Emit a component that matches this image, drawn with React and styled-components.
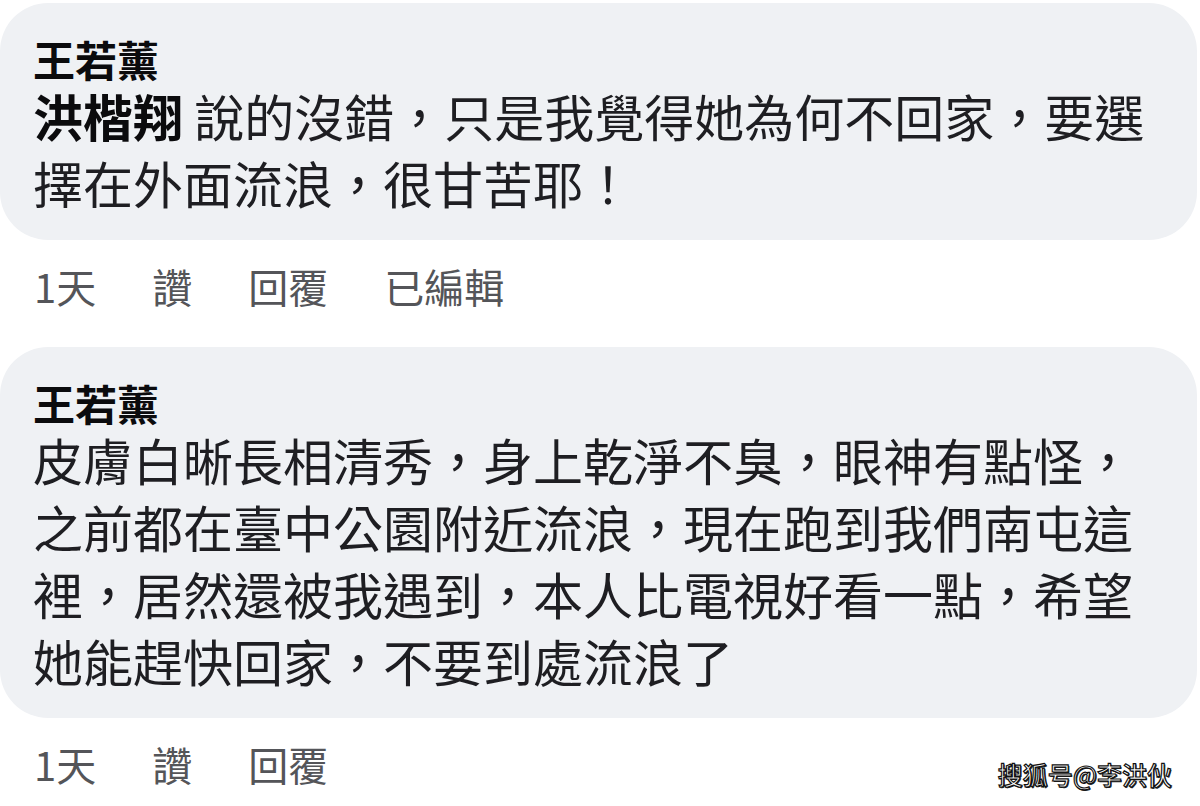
import React from "react";
import styled, { createGlobalStyle } from "styled-components";

const GlobalStyle = createGlobalStyle`
  html, body {
    margin: 0;
    padding: 0;
    background: #ffffff;
  }
  body {
    font-family: "Noto Sans CJK TC", "Noto Sans CJK SC", "Noto Sans", sans-serif;
    color: #1c1e21;
  }
`;

const comments = [
  {
    name: "王若薰",
    tag: "洪楷翔",
    lines: ["說的沒錯，只是我覺得她為何不回家，要選", "擇在外面流浪，很甘苦耶！"],
    actions: ["1天", "讚", "回覆", "已編輯"],
  },
  {
    name: "王若薰",
    lines: [
      "皮膚白晰長相清秀，身上乾淨不臭，眼神有點怪，",
      "之前都在臺中公園附近流浪，現在跑到我們南屯這",
      "裡，居然還被我遇到，本人比電視好看一點，希望",
      "她能趕快回家，不要到處流浪了",
    ],
    actions: ["1天", "讚", "回覆"],
  },
];

function Comment({ name, tag, lines, actions, first }) {
  return (
    <Item first={first}>
      <Bubble>
        <Name>{name}</Name>
        <Body>
          {lines.map((line, i) => (
            <Line key={i}>
              {i === 0 && tag && <Tag>{tag} </Tag>}
              {line}
            </Line>
          ))}
        </Body>
      </Bubble>
      <Actions>
        {actions.map((a) => (
          <Action key={a}>{a}</Action>
        ))}
      </Actions>
    </Item>
  );
}

export default function App() {
  return (
    <Page>
      <GlobalStyle />
      {comments.map((c, i) => (
        <Comment key={i} first={i === 0} {...c} />
      ))}
      <Watermark>搜狐号@李洪伙</Watermark>
    </Page>
  );
}

const Page = styled.div`
  position: relative;
  width: 1200px;
  height: 806px;
  overflow: hidden;
  padding-top: 3px;
  box-sizing: border-box;
`;

const Item = styled.div`
  display: flex;
  flex-direction: column;
  margin-bottom: ${(p) => (p.first ? "37px" : "0")};
`;

const Bubble = styled.div`
  width: 1197px;
  background: #eff1f4;
  border-radius: 48px;
  padding: 32px 0 24px 33px;
  box-sizing: border-box;
`;

const Name = styled.div`
  font-size: 42px;
  font-weight: 700;
  line-height: 47px;
  color: #0b0b0d;
`;

const Body = styled.div`
  font-size: 50px;
  line-height: 67px;
  color: #1e1e22;
`;

const Line = styled.div`
  white-space: nowrap;
`;

const Tag = styled.span`
  font-weight: 700;
  color: #0b0b0d;
`;

const Actions = styled.div`
  display: flex;
  gap: 56px;
  padding: 22px 0 0 34px;
  align-items: center;
`;

const Action = styled.span`
  font-size: 40px;
  line-height: 48px;
  color: #545559;
`;

const Watermark = styled.div`
  position: absolute;
  right: 28px;
  bottom: 14px;
  font-size: 25px;
  font-weight: 500;
  color: #ffffff;
  -webkit-text-stroke: 1.2px #111;
  text-shadow: 1px 1px 0 #222;
`;
